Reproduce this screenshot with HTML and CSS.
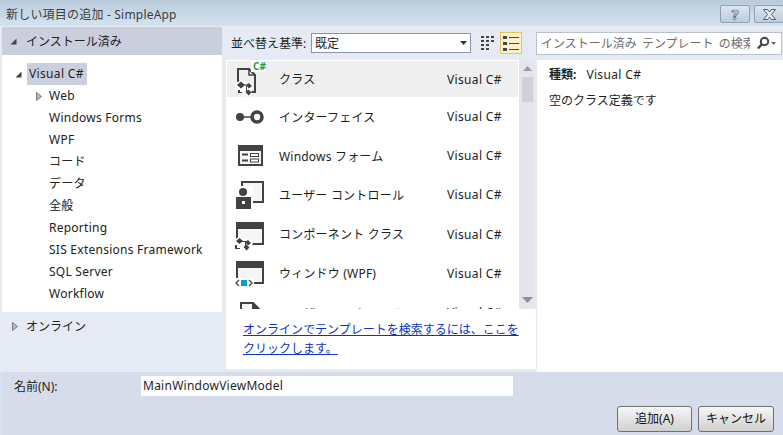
FILE: index.html
```html
<!DOCTYPE html>
<html lang="ja">
<head>
<meta charset="utf-8">
<title>新しい項目の追加 - SimpleApp</title>
<link rel="stylesheet" href="styles.css">
</head>
<body>
<div class="dialog">
  <header class="titlebar">
    <span class="title-text">新しい項目の追加 - SimpleApp</span>
    <div class="window-btns">
      <div class="win-btn help-btn">?</div>
      <div class="win-btn close-btn"><svg width="15" height="11" viewBox="0 0 15 11"><path d="M1.500 0.500h4l2 2.500 2-2.500h4L9.500 5.500l4 5h-4l-2-2.500-2 2.500h-4l4-5z" fill="#e6edf4" stroke="#4f5c6a"/></svg></div>
    </div>
  </header>
  <main class="main">
    <aside class="left">
      <div class="left-header">
        <svg class="tri" width="7" height="7" viewBox="0 0 7 7"><path d="M6.500 0.500V6.500H0.500z" fill="#444"/></svg>
        <span>インストール済み</span>
      </div>
      <div class="tree">
        <div class="tree-root">
          <svg class="tri" width="7" height="7" viewBox="0 0 7 7"><path d="M6.500 0.500V6.500H0.500z" fill="#444"/></svg>
          <span class="tree-selected">Visual C#</span>
        </div>
        <div class="tree-item tree-web">
          <svg class="tri" width="6" height="9" viewBox="0 0 6 9"><path d="M0.500 0.500L5.500 4.500L0.500 8.500z" fill="#bbb" stroke="#777"/></svg>
          <span>Web</span>
        </div>
        <div class="tree-item">Windows Forms</div>
        <div class="tree-item">WPF</div>
        <div class="tree-item">コード</div>
        <div class="tree-item">データ</div>
        <div class="tree-item">全般</div>
        <div class="tree-item">Reporting</div>
        <div class="tree-item">SIS Extensions Framework</div>
        <div class="tree-item">SQL Server</div>
        <div class="tree-item">Workflow</div>
      </div>
      <div class="online">
        <svg class="tri" width="6" height="9" viewBox="0 0 6 9"><path d="M0.500 0.500L5.500 4.500L0.500 8.500z" fill="#bbb" stroke="#777"/></svg>
        <span>オンライン</span>
      </div>
    </aside>
    <section class="center">
      <div class="sortbar">
        <span class="sort-label">並べ替え基準:</span>
        <div class="select"><span>既定</span><svg width="7" height="4" viewBox="0 0 7 4"><path d="M0 0h7L3.500 4z" fill="#333"/></svg></div>
        <div class="view-btn">
          <svg width="14" height="14" viewBox="0 0 14 14" fill="#444"><path d="M0 0h3v2H0zM5 0h3v2H5zM10 0h3v2h-3zM0 4h3v2H0zM5 4h3v2H5zM10 4h3v2h-3zM0 8h3v2H0zM5 8h3v2H5zM0 12h3v2H0zM5 12h3v2H5z"/></svg>
        </div>
        <div class="view-btn active">
          <svg width="16" height="15" viewBox="0 0 16 15" fill="#444"><path d="M0 0h4v3H0zM0 6h4v3H0zM0 12h4v3H0zM6 1h10v1H6zM6 7h10v1H6zM6 13h10v1H6z"/></svg>
        </div>
      </div>
      <div class="list-wrap">
        <div class="list">
          <div class="row row-selected">
            <svg class="row-icon" width="36" height="36" viewBox="0 0 36 36">
              <path d="M6 21V8h11l6 6v17h-5" fill="none" stroke="#424242" stroke-width="2"/>
              <path d="M17 8v6h6" fill="none" stroke="#424242" stroke-width="1.500"/>
              <path d="M3 24l6-6 5 3 5 0 2 6-2 2 1 4-3 3-6-1-1-4-4 0z" fill="#fff"/>
              <path d="M5 24l4-3.500 4 3.500-4 3.500zM14 24l3-2 3 3-3 2.500zM13.500 31l3-2.500 3 3-3 3zM6 29l2 0 0 2 2 0 0 1H6z" fill="#424242"/>
              <path d="M9 24h7M14.500 25v6" stroke="#424242" fill="none"/>
              <rect x="19" y="0" width="14" height="11" fill="#fff"/>
            </svg>
            <span class="csharp-tag">C#</span>
            <span class="row-name">クラス</span><span class="row-lang">Visual C#</span>
          </div>
          <div class="row">
            <svg class="row-icon" width="36" height="36" viewBox="0 0 36 36">
              <circle cx="8" cy="18" r="4" fill="#424242"/>
              <path d="M8 18h12" stroke="#424242" stroke-width="1.500"/>
              <circle cx="25" cy="18" r="5" fill="#fff" stroke="#424242" stroke-width="3.500"/>
            </svg>
            <span class="row-name">インターフェイス</span><span class="row-lang">Visual C#</span>
          </div>
          <div class="row">
            <svg class="row-icon" width="36" height="36" viewBox="0 0 36 36">
              <rect x="6" y="7" width="25" height="21" fill="#424242"/>
              <rect x="8" y="13" width="21" height="13" fill="#f6f6f6"/>
              <path d="M10 16.500h6M10 22.500h6" stroke="#424242" stroke-width="2"/>
              <rect x="18.500" y="15.500" width="8" height="3" fill="#fff" stroke="#424242"/>
              <rect x="18.500" y="21" width="8" height="3" fill="#fff" stroke="#424242"/>
            </svg>
            <span class="row-name">Windows フォーム</span><span class="row-lang">Visual C#</span>
          </div>
          <div class="row">
            <svg class="row-icon" width="36" height="36" viewBox="0 0 36 36">
              <rect x="10" y="5" width="21" height="20" fill="#f6f6f6" stroke="#424242" stroke-width="2"/>
              <rect x="2" y="9" width="19" height="24" fill="#fff"/>
              <circle cx="11" cy="15" r="4" fill="#424242"/>
              <path d="M4 20h15v12H4z" fill="#424242"/>
              <rect x="10" y="24" width="3" height="3" fill="#fff"/>
            </svg>
            <span class="row-name">ユーザー コントロール</span><span class="row-lang">Visual C#</span>
          </div>
          <div class="row">
            <svg class="row-icon" width="36" height="36" viewBox="0 0 36 36">
              <rect x="5" y="7" width="26" height="21" fill="#f6f6f6" stroke="#424242" stroke-width="2"/>
              <rect x="4" y="6" width="28" height="7" fill="#424242"/>
              <path d="M2 25l5-5 5 3 6 0 3 5-3 3 0 3-5 1-3-3-1 1H2z" fill="#fff"/>
              <path d="M4 25l3.500-3 3.500 3-3.500 3zM13 26l3-2 3 3-3 2.500zM11.500 31l3-2.500 3 3-3 3zM3 29h2v3h3v1H3z" fill="#424242"/>
              <path d="M8 25.500h6M13.500 26v4" stroke="#424242" fill="none"/>
            </svg>
            <span class="row-name">コンポーネント クラス</span><span class="row-lang">Visual C#</span>
          </div>
          <div class="row">
            <svg class="row-icon" width="36" height="36" viewBox="0 0 36 36">
              <rect x="5" y="7" width="26" height="21" fill="#f6f6f6" stroke="#424242" stroke-width="2"/>
              <rect x="4" y="6" width="28" height="7" fill="#424242"/>
              <rect x="2" y="23" width="20" height="10" fill="#fff"/>
              <rect x="9" y="25" width="6" height="6" fill="#00a0e0"/>
              <path d="M7 25l-3 3 3 3M17 25l3 3-3 3" fill="none" stroke="#555" stroke-width="1.500"/>
            </svg>
            <span class="row-name">ウィンドウ (WPF)</span><span class="row-lang">Visual C#</span>
          </div>
          <div class="row">
            <svg class="row-icon" width="36" height="36" viewBox="0 0 36 36">
              <path d="M9 26V8h12l6 6v12" fill="#f6f6f6" stroke="#424242" stroke-width="2"/>
              <path d="M20 7l8 8h-8z" fill="#424242"/>
            </svg>
            <span class="row-name">ユーザー コントロール (WPF)</span><span class="row-lang">Visual C#</span>
          </div>
        </div>
        <div class="scrollbar">
          <svg width="9" height="5" viewBox="0 0 9 5"><path d="M4.500 0L9 5H0z" fill="#9a9aa4"/></svg>
          <div class="thumb"></div>
          <svg class="scroll-down" width="11" height="6" viewBox="0 0 11 6"><path d="M0 0h11L5.500 6z" fill="#8f8f99"/></svg>
        </div>
      </div>
      <div class="linkbox"><a class="link" href="#">オンラインでテンプレートを検索するには、ここを<br>クリックします。</a></div>
    </section>
    <section class="right">
      <div class="searchbar">
        <div class="search">
          <span class="search-text">インストール済み テンプレート の検索</span>
          <svg width="14" height="14" viewBox="0 0 14 14"><circle cx="8.500" cy="5.500" r="3.700" fill="#fff" stroke="#444" stroke-width="2"/><path d="M6 8l-4 4.500" stroke="#444" stroke-width="2.500"/></svg>
          <svg width="5" height="3" viewBox="0 0 5 3"><path d="M0 0h5L2.500 3z" fill="#666"/></svg>
        </div>
      </div>
      <div class="detail">
        <div class="detail-type"><b>種類:</b><span>Visual C#</span></div>
        <div class="detail-desc">空のクラス定義です</div>
      </div>
    </section>
  </main>
  <footer class="footer">
    <div class="name-row">
      <span class="name-label">名前(N):</span>
      <div class="name-input">MainWindowViewModel</div>
    </div>
    <div class="actions">
      <div class="btn btn-add">追加(A)</div>
      <div class="btn btn-cancel">キャンセル</div>
    </div>
  </footer>
</div>
</body>
</html>
```
FILE: styles.css
```css
* { box-sizing: border-box; }
html, body { margin: 0; padding: 0; }
body {
  width: 783px;
  height: 435px;
  overflow: hidden;
  font-family: "Noto Sans", "Noto Sans CJK JP", sans-serif;
  font-size: 12px;
  color: #1e1e1e;
  background: #d6e4f0;
}
.dialog { display: flex; flex-direction: column; width: 783px; height: 435px; }

.titlebar {
  height: 26px;
  flex: none;
  display: flex;
  align-items: flex-start;
  justify-content: space-between;
  padding-left: 6px;
  background: linear-gradient(#b9cbdb, #d4e3f0);
}
.title-text { color: #3c3c3c; line-height: 30px; letter-spacing: 0.2px; }
.window-btns { display: flex; gap: 4px; padding-top: 5px; margin-right: -1px; }
.win-btn {
  height: 18px;
  border: 1px solid #8fa2b5;
  border-radius: 2px;
  background: linear-gradient(#dbe6ef, #bccddc);
  display: flex;
  align-items: center;
  justify-content: center;
}
.help-btn { width: 30px; font-size: 14px; font-weight: 700; color: #e6edf4; -webkit-text-stroke: 0.7px #4f5c6a; }
.close-btn { width: 30px; }

.main {
  height: 346px;
  flex: none;
  display: flex;
  padding-left: 2px;
  background: #e6eaf5;
}

.left { width: 220px; flex: none; display: flex; flex-direction: column; padding-top: 1px; }
.left-header {
  height: 28px;
  flex: none;
  display: flex;
  align-items: center;
  gap: 9px;
  padding-left: 8px;
  background: #cbcfdd;
  color: #222;
}
.tree { height: 257px; flex: none; background: #fff; padding-top: 8px; }
.tree-root { display: flex; align-items: center; height: 22px; padding-left: 13px; gap: 5px; }
.tree-selected { background: #cbcfdd; height: 22px; line-height: 22px; width: 60px; padding-left: 2px; letter-spacing: 0.35px; }
.tree-item { height: 22px; line-height: 22px; padding-left: 47px; letter-spacing: 0.25px; color: #222; }
.tree-web { display: flex; align-items: center; padding-left: 34px; gap: 7px; }
.online {
  flex: 1;
  display: flex;
  align-items: flex-start;
  gap: 8px;
  padding: 6px 0 0 10px;
  line-height: 17px;
}
.online .tri { margin-top: 4px; }

.center { width: 310px; flex: none; margin-left: 4px; display: flex; flex-direction: column; }
.sortbar { height: 34px; flex: none; display: flex; align-items: center; padding: 0 13px 0 5px; }
.sort-label { width: 80px; flex: none; letter-spacing: 0; }
.select {
  width: 160px;
  height: 20px;
  flex: none;
  display: flex;
  align-items: center;
  justify-content: space-between;
  padding: 0 3px 0 3px;
  background: #fff;
  border: 1px solid #8b96ab;
}
.view-btn {
  width: 22px;
  height: 22px;
  flex: none;
  display: flex;
  align-items: center;
  justify-content: center;
}
.select + .view-btn { margin-left: 5px; width: 24px; }
.view-btn.active { background: #fff1c9; border: 1px solid #e5c365; }

.list-wrap { height: 249px; flex: none; display: flex; }
.list { width: 293px; flex: none; height: 249px; overflow: hidden; background: #fff; padding: 1px 0 0 1px; }
.row {
  position: relative;
  display: flex;
  align-items: center;
  height: 39.200px;
  padding-left: 5px;
}
.row-selected { height: 36px; background: #efefef; margin-right: 1px; }
.row-icon { flex: none; }
.row-name { width: 168px; flex: none; margin-left: 11px; letter-spacing: 0.2px; }
.row-lang { letter-spacing: 0.35px; color: #222; white-space: nowrap; }
.csharp-tag {
  position: absolute;
  left: 26px;
  top: 0;
  font-size: 10px;
  line-height: 10px;
  font-weight: 700;
  color: #2f9a3a;
}
.scrollbar {
  width: 16px;
  flex: none;
  display: flex;
  flex-direction: column;
  align-items: center;
  background: #e5e5ec;
  padding-top: 6px;
}
.thumb { width: 11px; height: 25px; margin-top: 6px; background: #d0d0d7; }
.scroll-down { margin-top: auto; margin-bottom: 6px; }
.linkbox { height: 60px; flex: none; background: #fff; padding: 11px 0 0 17px; line-height: 19px; }
.link { color: #0a35c4; text-decoration: underline; }

.right { flex: 1; display: flex; flex-direction: column; min-width: 0; }
.searchbar { height: 34px; flex: none; display: flex; align-items: center; padding-right: 1px; }
.search {
  width: 246px;
  height: 23px;
  display: flex;
  align-items: center;
  gap: 1px;
  padding: 0 4px 0 4px;
  background: #fff;
  border: 1px solid #b9c1cf;
}
.search-text { width: 209px; flex: none; margin-right: 5px; overflow: hidden; white-space: nowrap; word-spacing: 2px; color: #6d6d6d; }
.detail { flex: 1; margin-left: 1px; background: #fff; padding: 6px 0 0 12px; }
.detail-type { display: flex; gap: 10px; line-height: 17px; }
.detail-type span { letter-spacing: 0.35px; }
.detail-desc { margin-top: 9px; line-height: 17px; }

.footer {
  flex: 1;
  margin-left: 2px;
  background: #d6dcea;
  display: flex;
  flex-direction: column;
  padding: 4px 9px 0 12px;
}
.name-row { display: flex; align-items: center; height: 20px; }
.name-label { width: 127px; flex: none; }
.name-input {
  width: 372px;
  height: 20px;
  line-height: 20px;
  background: #fff;
  padding-left: 2px;
  letter-spacing: 0.25px;
}
.actions { display: flex; justify-content: flex-end; gap: 6px; margin-top: 10px; }
.btn {
  height: 26px;
  line-height: 24px;
  text-align: center;
  border: 1px solid #707070;
  border-radius: 3px;
  background: linear-gradient(#f6f6f6, #d0d0d0);
  color: #111;
}
.btn-add { width: 75px; }
.btn-cancel { width: 76px; }
```
